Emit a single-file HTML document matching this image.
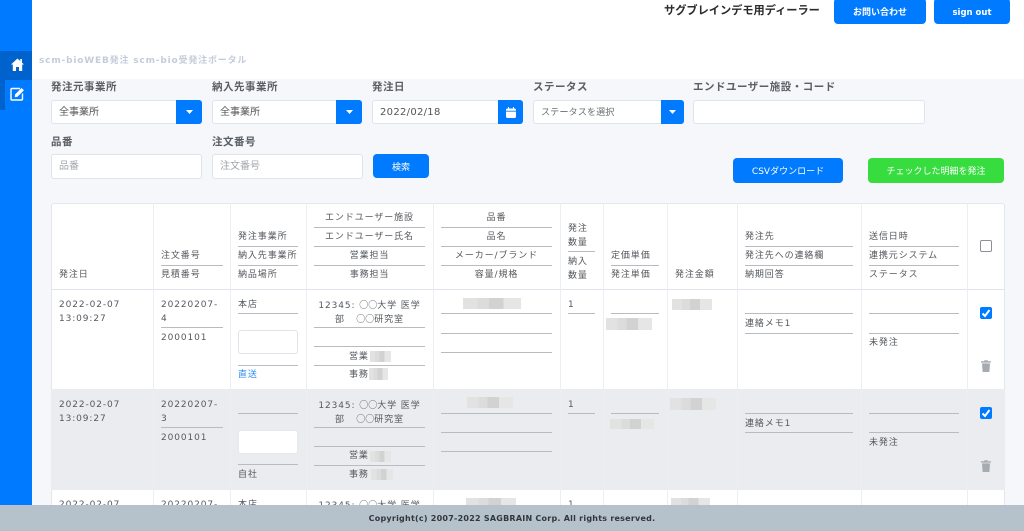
<!DOCTYPE html>
<html lang="ja"><head><meta charset="utf-8"><title>scm-bio</title>
<style>
html,body{margin:0;padding:0;background:#f5f7fa}
#w{position:relative;width:1024px;height:531px;overflow:hidden;background:#f5f7fa;font-family:"DejaVu Sans","Noto Sans CJK JP",sans-serif;filter:blur(.3px)}
#w div{position:absolute;box-sizing:border-box}
.a{white-space:nowrap}
.lb{font-size:10.5px;font-weight:700;color:#5a5f66;line-height:14px;letter-spacing:.5px;white-space:nowrap;margin-top:1px}
.in{background:#fff;border:1px solid #dfe3ea;border-radius:3px;height:24px;font-size:10px;line-height:24px;padding-left:7px;color:#555;white-space:nowrap}
.ph{color:#a3a7ac}
.bt{background:#007bff;display:flex;align-items:center;justify-content:center}
.b{background:#007bff;border-radius:4px;color:#fff;font-size:9px;text-align:center;white-space:nowrap;padding-top:2px}
.t{font-size:9px;letter-spacing:.9px;color:#54585d;line-height:12px;white-space:nowrap;margin-top:1px}
.c{text-align:center}
.l{height:1px;background:#b9bbbf}
.v{top:203px;width:1px;height:302px;background:#eceef1}
.m{background:linear-gradient(90deg,#e2e2e2 0 25%,#dcdcdc 25% 45%,#d2d2d2 45% 70%,#e6e6e6 70%)}
.cb{width:12px;height:12px;background:#007bff;border-radius:2px}
.o{font-family:"Noto Sans CJK JP",sans-serif;letter-spacing:0}
svg{display:block}
</style></head><body>
<div id="w">
<div style="left:32px;top:0;width:992px;height:79px;background:#fff"></div>
<div style="left:0;top:0;width:32px;height:531px;background:#007bff"></div>
<div style="left:0;top:51px;width:32px;height:29px;background:#0062cc"></div>
<div style="left:0;top:80px;width:5px;height:30px;background:#0062cc"></div>
<div style="left:11px;top:58px"><svg width="13" height="13" viewBox="0 0 13 13"><path d="M6.500 0.500 L0 6.500 L1.800 6.500 L1.800 13 L5 13 L5 9 L8 9 L8 13 L11.200 13 L11.200 6.500 L13 6.500 L11 4.600 L11 1 L9.300 1 L9.300 3 Z" fill="#fff"/></svg></div>
<div style="left:10px;top:87px"><svg width="15" height="14" viewBox="0 0 15 14"><path d="M10 1.500 H2 Q1 1.500 1 2.500 V12 Q1 13 2 13 H11.500 Q12.500 13 12.500 12 V6.500" fill="none" stroke="#fff" stroke-width="1.400"/><path d="M5 7.500 L11.500 1 L14 3.300 L7.500 9.800 L4.800 10.200 Z" fill="#fff"/></svg></div>
<div class="a" style="left:39px;top:55px;font-size:9px;font-weight:700;letter-spacing:.82px;color:#c4ccdc;line-height:13px">scm-bioWEB発注 scm-bio受発注ポータル</div>
<div class="a" style="left:664px;top:3px;font-size:11.2px;font-weight:700;color:#2b2b2b;line-height:15px">サグブレインデモ用ディーラー</div>
<div class="b" style="left:834px;top:-2px;width:92px;height:26px;line-height:26px;font-weight:700;font-size:9px">お問い合わせ</div>
<div class="b" style="left:934px;top:-2px;width:76px;height:26px;line-height:26px;font-weight:700;font-size:8.5px">sign out</div>

<div class="lb" style="left:51px;top:79px">発注元事業所</div>
<div class="lb" style="left:212px;top:79px">納入先事業所</div>
<div class="lb" style="left:372px;top:79px">発注日</div>
<div class="lb" style="left:533px;top:79px">ステータス</div>
<div class="lb" style="left:693px;top:79px">エンドユーザー施設・コード</div>
<div class="in" style="left:51px;top:100px;width:151px">全事業所</div>
<div class="bt" style="left:176px;top:100px;width:26px;height:24px;border-radius:0 3px 3px 0"><svg width="7" height="4"><path d="M0 0H7L3.500 4Z" fill="#fff"/></svg></div>
<div class="in" style="left:212px;top:100px;width:150px">全事業所</div>
<div class="bt" style="left:336px;top:100px;width:26px;height:24px;border-radius:0 3px 3px 0"><svg width="7" height="4"><path d="M0 0H7L3.500 4Z" fill="#fff"/></svg></div>
<div class="in" style="left:372px;top:100px;width:127px;letter-spacing:.3px">2022/02/18</div>
<div class="bt" style="left:498px;top:100px;width:25px;height:24px;border-radius:0 3px 3px 0"><svg width="10" height="11" viewBox="0 0 10 11"><path d="M0 3 Q0 1.500 1.500 1.500 H2 V0 H3 V1.500 H7 V0 H8 V1.500 H8.500 Q10 1.500 10 3 V3.800 H0 Z M0 4.600 H10 V9.500 Q10 11 8.500 11 H1.500 Q0 11 0 9.500 Z" fill="#fff"/></svg></div>
<div class="in" style="left:533px;top:100px;width:151px;font-size:9.2px;color:#6b6f74">ステータスを選択</div>
<div class="bt" style="left:661px;top:100px;width:23px;height:24px;border-radius:0 3px 3px 0"><svg width="7" height="4"><path d="M0 0H7L3.500 4Z" fill="#fff"/></svg></div>
<div class="in" style="left:693px;top:100px;width:232px"></div>

<div class="lb" style="left:51px;top:134px">品番</div>
<div class="lb" style="left:212px;top:134px">注文番号</div>
<div class="in ph" style="left:51px;top:154px;width:151px;height:25px">品番</div>
<div class="in ph" style="left:212px;top:154px;width:151px;height:25px">注文番号</div>
<div class="b" style="left:373px;top:154px;width:56px;height:24px;line-height:24px">検索</div>
<div class="b" style="left:733px;top:158px;width:110px;height:25px;line-height:25px">CSVダウンロード</div>
<div class="b" style="left:868px;top:158px;width:136px;height:25px;line-height:25px;background:#37dc3f">チェックした明細を発注</div>

<!-- table -->
<div style="left:51px;top:203px;width:954px;height:302px;background:#fff;border:1px solid #e3e6ec;border-bottom:0;border-radius:3px 3px 0 0"></div>
<div style="left:51px;top:389px;width:954px;height:101px;background:#ebecf0"></div>
<div style="left:51px;top:289px;width:954px;height:1px;background:#dfe4ec"></div>
<div class="v" style="left:153px"></div><div class="v" style="left:230px"></div><div class="v" style="left:306px"></div><div class="v" style="left:433px"></div><div class="v" style="left:560px"></div><div class="v" style="left:603px"></div><div class="v" style="left:667px"></div><div class="v" style="left:737px"></div><div class="v" style="left:861px"></div><div class="v" style="left:967px"></div>

<!-- header -->
<div class="t" style="left:59px;top:268px">発注日</div>
<div class="t" style="left:161px;top:249px">注文番号</div><div class="l" style="left:161px;top:265px;width:62px"></div><div class="t" style="left:161px;top:268px">見積番号</div>
<div class="t" style="left:238px;top:230px">発注事業所</div><div class="l" style="left:238px;top:246px;width:60px"></div><div class="t" style="left:238px;top:249px">納入先事業所</div><div class="l" style="left:238px;top:265px;width:60px"></div><div class="t" style="left:238px;top:268px">納品場所</div>
<div class="t c" style="left:314px;top:211px;width:111px">エンドユーザー施設</div><div class="l" style="left:314px;top:227px;width:111px"></div>
<div class="t c" style="left:314px;top:230px;width:111px">エンドユーザー氏名</div><div class="l" style="left:314px;top:246px;width:111px"></div>
<div class="t c" style="left:314px;top:249px;width:111px">営業担当</div><div class="l" style="left:314px;top:265px;width:111px"></div>
<div class="t c" style="left:314px;top:268px;width:111px">事務担当</div>
<div class="t c" style="left:441px;top:211px;width:111px">品番</div><div class="l" style="left:441px;top:227px;width:111px"></div>
<div class="t c" style="left:441px;top:230px;width:111px">品名</div><div class="l" style="left:441px;top:246px;width:111px"></div>
<div class="t c" style="left:441px;top:249px;width:111px">メーカー/ブランド</div><div class="l" style="left:441px;top:265px;width:111px"></div>
<div class="t c" style="left:441px;top:268px;width:111px">容量/規格</div>
<div class="t" style="left:568px;top:222px">発注</div><div class="t" style="left:568px;top:236px">数量</div><div class="l" style="left:568px;top:251px;width:27px"></div><div class="t" style="left:568px;top:255px">納入</div><div class="t" style="left:568px;top:269px">数量</div>
<div class="t" style="left:611px;top:249px">定価単価</div><div class="l" style="left:611px;top:265px;width:48px"></div><div class="t" style="left:611px;top:268px">発注単価</div>
<div class="t" style="left:675px;top:268px">発注金額</div>
<div class="t" style="left:745px;top:230px">発注先</div><div class="l" style="left:745px;top:246px;width:108px"></div><div class="t" style="left:745px;top:249px">発注先への連絡欄</div><div class="l" style="left:745px;top:265px;width:108px"></div><div class="t" style="left:745px;top:268px">納期回答</div>
<div class="t" style="left:869px;top:230px">送信日時</div><div class="l" style="left:869px;top:246px;width:90px"></div><div class="t" style="left:869px;top:249px">連携元システム</div><div class="l" style="left:869px;top:265px;width:90px"></div><div class="t" style="left:869px;top:268px">ステータス</div>
<div style="left:980px;top:240px;width:12px;height:12px;background:#fff;border:1px solid #8c8f94;border-radius:2px"></div>

<!-- row 1 -->
<div class="t" style="left:59px;top:298px">2022-02-07</div><div class="t" style="left:59px;top:312px">13:09:27</div>
<div class="t" style="left:161px;top:298px">20220207-</div><div class="t" style="left:161px;top:312px">4</div><div class="l" style="left:161px;top:327px;width:62px"></div><div class="t" style="left:161px;top:331px">2000101</div>
<div class="t" style="left:238px;top:298px">本店</div><div class="l" style="left:238px;top:313px;width:60px"></div>
<div style="left:238px;top:330px;width:60px;height:24px;background:#fff;border:1px solid #dfe3ea;border-radius:3px"></div>
<div class="l" style="left:238px;top:365px;width:60px"></div><div class="t" style="left:238px;top:368px;color:#2f8df5">直送</div>
<div class="t c" style="left:314px;top:298px;width:111px">12345: <span class="o">○○</span>大学 医学</div><div class="t c" style="left:314px;top:312px;width:111px">部 &nbsp; <span class="o">○○</span>研究室</div>
<div class="l" style="left:314px;top:327px;width:111px"></div><div class="l" style="left:314px;top:346px;width:111px"></div>
<div class="t" style="left:349px;top:350px">営業</div><div class="m" style="left:370px;top:351px;width:21px;height:11px"></div><div class="l" style="left:314px;top:365px;width:111px"></div>
<div class="t" style="left:349px;top:368px">事務</div><div class="m" style="left:369px;top:368px;width:19px;height:12px"></div>
<div class="m" style="left:463px;top:298px;width:58px;height:11px"></div>
<div class="l" style="left:441px;top:313px;width:111px"></div><div class="l" style="left:441px;top:333px;width:111px"></div><div class="l" style="left:441px;top:352px;width:111px"></div>
<div class="t" style="left:568px;top:298px">1</div><div class="l" style="left:568px;top:313px;width:27px"></div>
<div class="l" style="left:611px;top:313px;width:48px"></div><div class="m" style="left:606px;top:318px;width:46px;height:12px"></div>
<div class="m" style="left:672px;top:299px;width:40px;height:11px"></div>
<div class="l" style="left:745px;top:313px;width:108px"></div><div class="t" style="left:745px;top:317px">連絡メモ1</div><div class="l" style="left:745px;top:333px;width:108px"></div>
<div class="l" style="left:869px;top:313px;width:90px"></div><div class="l" style="left:869px;top:333px;width:90px"></div><div class="t" style="left:869px;top:336px">未発注</div>
<div class="cb" style="left:980px;top:307px"><svg width="12" height="12" viewBox="0 0 12 12"><path d="M2.500 6.500 L5 9 L9.500 3" fill="none" stroke="#fff" stroke-width="2"/></svg></div>
<div style="left:981px;top:360px"><svg width="10" height="12" viewBox="0 0 10 12"><path d="M0 1.200 H3 L3.500 .2 H6.500 L7 1.200 H10 V2.600 H0 Z M1 3.400 H9 L8.400 12 H1.600 Z" fill="#a5abb1"/></svg></div>

<!-- row 2 -->
<div class="t" style="left:59px;top:398px">2022-02-07</div><div class="t" style="left:59px;top:412px">13:09:27</div>
<div class="t" style="left:161px;top:398px">20220207-</div><div class="t" style="left:161px;top:412px">3</div><div class="l" style="left:161px;top:427px;width:62px"></div><div class="t" style="left:161px;top:431px">2000101</div>
<div class="l" style="left:238px;top:413px;width:60px"></div>
<div style="left:238px;top:430px;width:60px;height:24px;background:#fff;border:1px solid #e6e8ed;border-radius:3px"></div>
<div class="l" style="left:238px;top:464px;width:60px"></div><div class="t" style="left:238px;top:468px">自社</div>
<div class="t c" style="left:314px;top:398px;width:111px">12345: <span class="o">○○</span>大学 医学</div><div class="t c" style="left:314px;top:412px;width:111px">部 &nbsp; <span class="o">○○</span>研究室</div>
<div class="l" style="left:314px;top:427px;width:111px"></div><div class="l" style="left:314px;top:446px;width:111px"></div>
<div class="t" style="left:349px;top:449px">営業</div><div class="m" style="left:370px;top:451px;width:21px;height:11px"></div><div class="l" style="left:314px;top:465px;width:111px"></div>
<div class="t" style="left:349px;top:468px">事務</div><div class="m" style="left:371px;top:469px;width:22px;height:11px"></div>
<div class="m" style="left:467px;top:397px;width:46px;height:11px"></div>
<div class="l" style="left:441px;top:413px;width:111px"></div><div class="l" style="left:441px;top:432px;width:111px"></div><div class="l" style="left:441px;top:451px;width:111px"></div>
<div class="t" style="left:568px;top:398px">1</div><div class="l" style="left:568px;top:413px;width:27px"></div>
<div class="l" style="left:611px;top:413px;width:48px"></div><div class="m" style="left:610px;top:419px;width:44px;height:10px"></div>
<div class="m" style="left:670px;top:398px;width:46px;height:12px"></div>
<div class="l" style="left:745px;top:413px;width:108px"></div><div class="t" style="left:745px;top:417px">連絡メモ1</div><div class="l" style="left:745px;top:432px;width:108px"></div>
<div class="l" style="left:869px;top:413px;width:90px"></div><div class="l" style="left:869px;top:432px;width:90px"></div><div class="t" style="left:869px;top:436px">未発注</div>
<div class="cb" style="left:980px;top:407px"><svg width="12" height="12" viewBox="0 0 12 12"><path d="M2.500 6.500 L5 9 L9.500 3" fill="none" stroke="#fff" stroke-width="2"/></svg></div>
<div style="left:981px;top:460px"><svg width="10" height="12" viewBox="0 0 10 12"><path d="M0 1.200 H3 L3.500 .2 H6.500 L7 1.200 H10 V2.600 H0 Z M1 3.400 H9 L8.400 12 H1.600 Z" fill="#a5abb1"/></svg></div>

<!-- row 3 -->
<div class="t" style="left:59px;top:498px">2022-02-07</div>
<div class="t" style="left:161px;top:498px">20220207-</div>
<div class="t" style="left:238px;top:498px">本店</div>
<div class="t c" style="left:314px;top:498px;width:111px">12345: <span class="o">○○</span>大学 医学</div>
<div class="m" style="left:466px;top:498px;width:50px;height:8px"></div>
<div class="t" style="left:568px;top:498px">1</div>
<div class="m" style="left:671px;top:498px;width:39px;height:8px"></div>

<!-- footer -->
<div style="left:0;top:505px;width:1024px;height:26px;background:#b5c2cc"></div>
<div class="a" style="left:0;top:513px;width:1024px;text-align:center;font-size:8px;font-weight:700;letter-spacing:.24px;color:#33373c;line-height:12px">Copyright(c) 2007-2022 SAGBRAIN Corp. All rights reserved.</div>
</div>
</body></html>
